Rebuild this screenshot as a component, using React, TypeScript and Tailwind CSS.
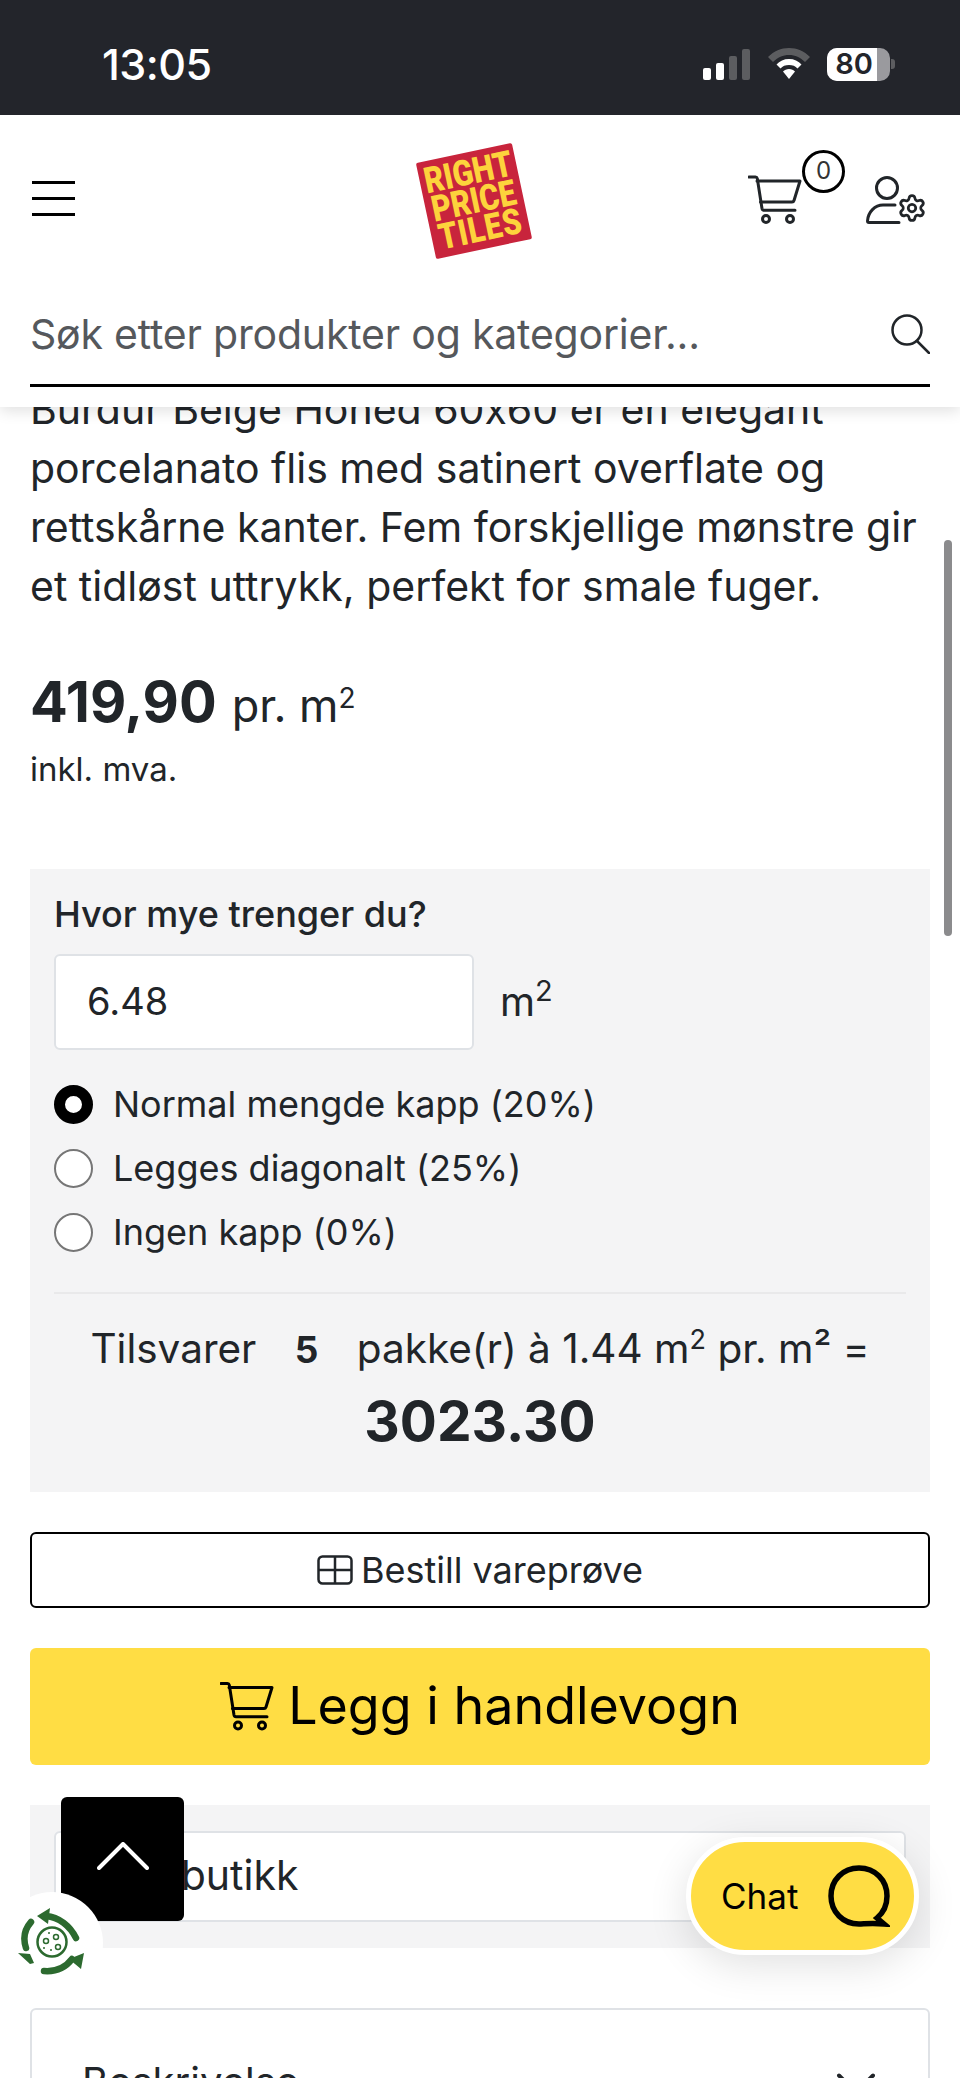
import { ChevronDown, Settings } from "lucide-react"

const font = "font-['Inter','Liberation_Sans',sans-serif] [font-feature-settings:'calt'_0]"

function Hamburger() {
  return (
    <div className="flex w-[43px] flex-col gap-[13px]">
      <div className="h-[3px] bg-black" />
      <div className="h-[3px] bg-black" />
      <div className="h-[3px] bg-black" />
    </div>
  )
}

function Logo() {
  return (
    <div className="flex h-[98px] w-[98px] -rotate-12 flex-col items-center justify-center rounded-[2px] bg-[#c8243c] font-['Roboto','Liberation_Sans',sans-serif] text-[36px] leading-[29px] font-black text-[#fdd33c]">
      <span className="scale-x-[0.84]">RIGHT</span>
      <span className="scale-x-[0.84]">PRICE</span>
      <span className="scale-x-[0.84] tracking-[1px]">TILES</span>
    </div>
  )
}

function CartIcon({ className }: { className?: string }) {
  return (
    <svg viewBox="0 0 54 49" fill="none" stroke="currentColor" strokeWidth="3" strokeLinecap="round" strokeLinejoin="round" className={className}>
      <path d="M1 2h6.500c1 0 1.600.6 1.800 1.500L14 33.500c.2 1 1 1.700 2 1.700h31" />
      <path d="M9 6h43l-6 19.500c-.3 1-1 1.500-2 1.500H12.500" />
      <circle cx="18" cy="44" r="3.500" />
      <circle cx="42" cy="44" r="3.500" />
    </svg>
  )
}

function UserGearIcon() {
  return (
    <svg viewBox="0 0 60 48" fill="none" stroke="currentColor" strokeWidth="3" strokeLinecap="round" strokeLinejoin="round" className="h-[48px] w-[60px]">
      <circle cx="21" cy="12" r="10.500" />
      <path d="M33 46.500H3c-1 0-1.500-.5-1.500-1.500C2 36 9 29 17 29h12" />
      <Settings x={31} y={17} width={30} height={30} strokeWidth={2.2} />
    </svg>
  )
}

function SearchIcon() {
  return (
    <svg viewBox="0 0 40 40" fill="none" stroke="currentColor" strokeWidth="2.500" strokeLinecap="round" className="h-[40px] w-[40px]">
      <circle cx="17" cy="16" r="14.500" />
      <path d="M27 27l12 12" />
    </svg>
  )
}

function StatusIcons() {
  return (
    <div className="flex items-center">
      <div className="flex items-end gap-[5px]">
        <div className="h-[12px] w-[8px] rounded-[2px] bg-white" />
        <div className="h-[17px] w-[8px] rounded-[2px] bg-white" />
        <div className="h-[24px] w-[8px] rounded-[2px] bg-[#5c5d60]" />
        <div className="h-[31px] w-[8px] rounded-[2px] bg-[#5c5d60]" />
      </div>
      <svg viewBox="0 0 42 32" className="ml-[18px] h-[32px] w-[42px]">
        <path d="M21 0C13 0 6 3 0 9l5 5c4.500-4.500 10-7 16-7s11.500 2.500 16 7l5-5C36 3 29 0 21 0z" fill="#5c5d60" />
        <path d="M21 11c-5 0-9.500 2-12.500 5.500l4 4C14.500 18 17.500 17 21 17s6.500 1 8.500 3.500l4-4C30.500 13 26 11 21 11z" fill="#fff" />
        <path d="M21 21c-2.500 0-4.500 1-6 2.500L21 31l6-7.500C25.500 22 23.500 21 21 21z" fill="#fff" />
      </svg>
      <div className="ml-[17px] flex items-center">
        <div className="relative flex h-[33px] w-[63px] overflow-hidden rounded-[10px] bg-[#9a9a9e]">
          <div className="flex w-[50px] items-center justify-center bg-white pl-[4px] font-['Inter',sans-serif] text-[29px] font-semibold text-[#23252b]">80</div>
        </div>
        <div className="ml-[1px] h-[10px] w-[4px] rounded-r-[3px] bg-[#5c5d60]" />
      </div>
    </div>
  )
}

function Radio({ label, checked }: { label: string; checked?: boolean }) {
  return (
    <div className="flex h-[64px] items-center">
      {checked ? (
        <div className="h-[39px] w-[39px] rounded-full border-[11px] border-black bg-white" />
      ) : (
        <div className="h-[39px] w-[39px] rounded-full border-2 border-[#767676] bg-white" />
      )}
      <span className="mt-[-2px] ml-[20px] text-[36px] text-[#212529]">{label}</span>
    </div>
  )
}

function RecycleBadge() {
  return (
    <div className="absolute top-[1892px] left-[1px] flex h-[102px] w-[102px] items-center justify-center rounded-full bg-white">
      <svg viewBox="0 0 68 70" fill="none" className="h-[70px] w-[68px] text-[#2c6a2f]">
        <g stroke="currentColor" strokeLinecap="round" fill="none">
          <path d="M13 14C6 22 5 31 8 40" strokeWidth="6.500" />
          <path d="M28 8c13 1 24 10 30 22" strokeWidth="6.500" />
          <path d="M26 63c13 1 22-4 28-12" strokeWidth="6.500" />
        </g>
        <path d="M0 45l12 1 4 9-4 1z M32 0l-2 16-11-8z M66 45l-3 16-12-10z" fill="currentColor" />
        <circle cx="34" cy="34" r="14.500" stroke="currentColor" strokeWidth="2.500" />
        <circle cx="28" cy="33" r="2.500" stroke="currentColor" strokeWidth="1.500" />
        <circle cx="38" cy="29" r="2.500" stroke="currentColor" strokeWidth="1.500" />
        <circle cx="40" cy="39" r="2.500" stroke="currentColor" strokeWidth="1.500" />
        <circle cx="33" cy="42" r="1" fill="currentColor" />
        <circle cx="26" cy="40" r="1" fill="currentColor" />
        <circle cx="31" cy="25" r="1" fill="currentColor" />
      </svg>
    </div>
  )
}

export default function App() {
  return (
    <div className={`relative h-[2078px] w-[960px] overflow-hidden bg-white text-[#212529] ${font}`}>
      {/* status bar */}
      <div className="relative z-20 flex h-[115px] items-center justify-between bg-[#23252b] pt-[13px] pr-[65px] pl-[102px]">
        <span className="text-[43px] font-medium tracking-[-0.5px] text-white">13:05</span>
        <StatusIcons />
      </div>

      {/* site header */}
      <header className="relative z-10 h-[292px] bg-white px-[30px] shadow-[0_4px_14px_rgba(0,0,0,0.12)]">
        <div className="relative flex h-[172px] items-center justify-between">
          <div className="-mt-[6px] ml-[2px]">
            <Hamburger />
          </div>
          <div className="absolute top-[37px] left-[395px]">
            <Logo />
          </div>
          <div className="mt-[-4px] mr-[4px] flex items-end">
            <div className="relative h-[49px] w-[54px]">
              <CartIcon className="h-[49px] w-[54px]" />
              <div className="absolute -top-[25px] left-[54px] flex h-[43px] w-[43px] items-center justify-center rounded-full border-[3px] border-black bg-white text-[24px] text-[#333]">0</div>
            </div>
            <div className="ml-[64px]">
              <UserGearIcon />
            </div>
          </div>
        </div>
        <div className="flex h-[100px] items-center justify-between border-b-[3px] border-black">
          <span className="mb-[2px] text-[41px] tracking-[-0.2px] text-[#55585c]">Søk etter produkter og kategorier...</span>
          <div className="mb-[4px]">
            <SearchIcon />
          </div>
        </div>
      </header>

      <main className="-mt-[27px] px-[30px]">
        <p className="text-[41px] leading-[59px]">
          Burdur Beige Honed 60x60 er en elegant porcelanato flis med satinert overflate og rettskårne kanter. Fem forskjellige mønstre gir et tidløst uttrykk, perfekt for smale fuger.
        </p>

        <div className="mt-[51px] flex items-baseline">
          <span className="text-[56px] leading-[70px] font-bold">419,90</span>
          <span className="ml-[15px] text-[45px]">
            pr. m<sup className="text-[28px]">2</sup>
          </span>
        </div>
        <div className="mt-[9px] text-[33px] leading-[40px]">inkl. mva.</div>

        <section className="mt-[80px] h-[623px] bg-[#f4f4f5] px-[24px] pt-[24px]">
          <div className="text-[36px] leading-[42px] font-medium">Hvor mye trenger du?</div>
          <div className="mt-[19px] flex items-center">
            <div className="flex h-[96px] w-[420px] items-center rounded-[6px] border-2 border-[#dfe2e6] bg-white pl-[31px] text-[38px]">6.48</div>
            <span className="ml-[26px] text-[40px]">
              m<sup className="text-[29px]">2</sup>
            </span>
          </div>
          <div className="mt-[23px]">
            <Radio label="Normal mengde kapp (20%)" checked />
            <Radio label="Legges diagonalt (25%)" />
            <Radio label="Ingen kapp (0%)" />
          </div>
          <div className="mt-[27px] h-[2px] bg-[#e9e9ea]" />
          <div className="mt-[30px] text-center text-[40.500px] leading-[50px] whitespace-nowrap">
            Tilsvarer <b className="mx-[27px] text-[37px] font-bold">5</b> pakke(r) à 1.44 m<sup className="text-[27px]">2</sup> pr. m² =
          </div>
          <div className="mt-[8px] text-center text-[55px] leading-[76px] font-bold">3023.30</div>
        </section>

        <button className="mt-[40px] flex h-[76px] w-full items-center justify-center gap-[8px] rounded-[6px] border-2 border-black bg-white text-[36px]">
          <svg viewBox="0 0 36 30" fill="none" stroke="#212529" strokeWidth="2.500" className="h-[30px] w-[36px]">
            <rect x="1.500" y="1.500" width="33" height="27" rx="4" />
            <path d="M18 1.500v27M1.500 15h33" />
          </svg>
          Bestill vareprøve
        </button>

        <button className="mt-[40px] flex h-[117px] w-full items-center justify-center gap-[14px] rounded-[6px] bg-[#ffdd44] text-[52px] text-black">
          <CartIcon className="h-[50px] w-[54px]" />
          Legg i handlevogn
        </button>

        <section className="mt-[40px] h-[143px] bg-[#f4f4f5] px-[24px] pt-[26px]">
          <div className="flex h-[91px] items-center rounded-[6px] border-2 border-[#dfe2e6] bg-white pl-[28px] text-[41px]">Velg butikk</div>
        </section>

        <section className="mt-[60px] flex h-[140px] items-start justify-between rounded-[6px] border-2 border-[#dfe2e6] bg-white pt-[48px] pr-[50px] pl-[50px]">
          <span className="text-[40px] leading-[48px]">Beskrivelse</span>
          <ChevronDown className="mt-[-8px] -mr-[12px] h-[68px] w-[68px]" strokeWidth={1.4} />
        </section>
      </main>

      {/* floating stuff */}
      <div className="absolute top-[540px] left-[944px] h-[396px] w-[8px] rounded-full bg-[#8b8b8d]" />
      <div className="absolute top-[1797px] left-[61px] flex h-[124px] w-[123px] justify-center rounded-[6px] bg-black pt-[45px]">
        <svg viewBox="0 0 52 28" fill="none" stroke="#fff" strokeWidth="4" strokeLinecap="round" strokeLinejoin="round" className="h-[28px] w-[52px]">
          <path d="M2 26L26 2l24 24" />
        </svg>
      </div>
      <RecycleBadge />
      <div className="absolute top-[1837px] left-[686px] flex h-[118px] w-[233px] items-center justify-between rounded-full border-[5px] border-white bg-[#ffdd44] pr-[24px] pl-[30px] shadow-[0_10px_40px_rgba(0,0,0,0.12)]">
        <span className="text-[35px] text-black">Chat</span>
        <svg viewBox="0 0 62 62" fill="none" stroke="#000" strokeWidth="5.500" className="h-[62px] w-[62px]">
          <path d="M31 3C15 3 3 15 3 31s12 28 28 28c5 0 12-1 25 0l-7-6c6-5 10-13 10-22C59 15 47 3 31 3z" />
        </svg>
      </div>
    </div>
  )
}
